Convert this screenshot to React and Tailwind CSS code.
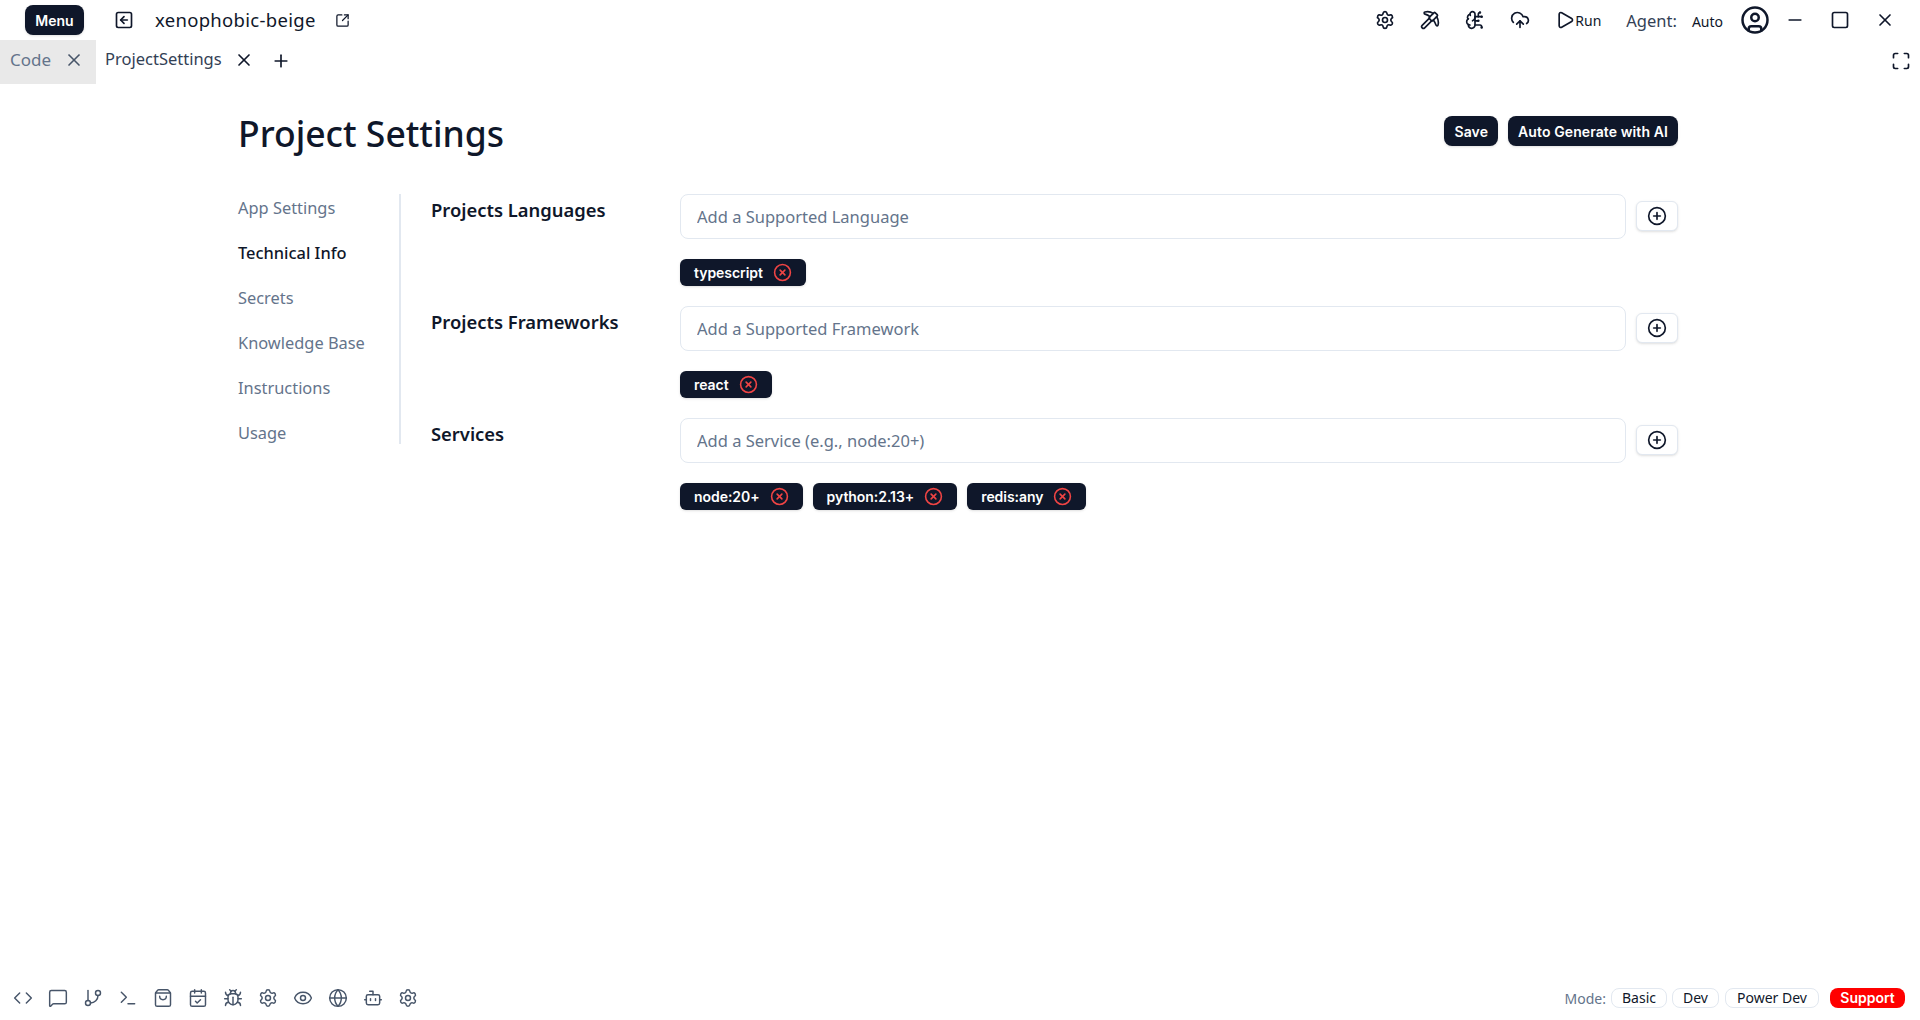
import React from "react";
import {
    Bot,
    BrainCircuit,
    Bug,
    CalendarCheck,
    CirclePlus,
    CircleUser,
    CircleX,
    CloudUpload,
    Code,
    Eye,
    GitBranch,
    Globe,
    Maximize,
    MessageSquare,
    Minus,
    Pickaxe,
    Play,
    Plus,
    Settings,
    ShoppingBag,
    Square,
    SquareArrowLeft,
    SquareArrowOutUpRight,
    Terminal,
    X,
} from "lucide-react";

const sidebarItems = [
    "App Settings",
    "Technical Info",
    "Secrets",
    "Knowledge Base",
    "Instructions",
    "Usage",
];

const sections = [
    {
        label: "Projects Languages",
        placeholder: "Add a Supported Language",
        tags: ["typescript"],
    },
    {
        label: "Projects Frameworks",
        placeholder: "Add a Supported Framework",
        tags: ["react"],
    },
    {
        label: "Services",
        placeholder: "Add a Service (e.g., node:20+)",
        tags: ["node:20+", "python:2.13+", "redis:any"],
    },
];

const footerIcons = [
    Code,
    MessageSquare,
    GitBranch,
    Terminal,
    ShoppingBag,
    CalendarCheck,
    Bug,
    Settings,
    Eye,
    Globe,
    Bot,
    Settings,
];

const Tag = ({ name }) => (
    <div className="flex h-[27px] items-center rounded-md bg-[#0f172a] pl-[14px] pr-[14px] font-['Inter',sans-serif] text-[14px] font-semibold tracking-[-0.05px] text-white shadow-sm">
        {name}
        <CircleX className="ml-[10px] h-[19px] w-[19px] text-[#ef4444]" strokeWidth={2} />
    </div>
);

const Section = ({ section }) => (
    <div className="flex">
        <div className="w-[249px] pt-[2px] text-[18.4px] leading-7 font-semibold text-[#0f172a]">
            {section.label}
        </div>
        <div className="flex-1">
            <div className="flex items-start gap-[10px]">
                <input
                    className="h-[45px] flex-1 rounded-lg border border-[#e2e8f0] bg-white px-4 text-[16.5px] text-[#0f172a] outline-none placeholder:text-[#64748b]"
                    placeholder={section.placeholder}
                />
                <button className="mt-[7px] flex h-[30px] w-[42px] items-center justify-center rounded-md border border-[#e2e8f0] bg-white shadow-sm">
                    <CirclePlus className="h-5 w-5 text-[#0f172a]" strokeWidth={2} />
                </button>
            </div>
            <div className="mt-[20px] flex h-[27px] gap-[10px]">
                {section.tags.map((tag) => (
                    <Tag key={tag} name={tag} />
                ))}
            </div>
        </div>
    </div>
);

const App = () => {
    return (
        <div className="flex h-[1020px] flex-col overflow-hidden bg-white font-['Noto_Sans',sans-serif] text-[#0f172a]">
            <header className="flex h-10 items-center pl-[25px] pr-[25px]">
                <button className="flex h-[30px] w-[59px] items-center justify-center rounded-lg bg-[#0f172a] font-['Inter',sans-serif] text-[14px] font-semibold text-white shadow-sm">
                    Menu
                </button>
                <SquareArrowLeft className="ml-[30px] h-5 w-5" strokeWidth={2} />
                <span className="ml-[21px] text-[18.5px] tracking-[0.3px]">xenophobic-beige</span>
                <SquareArrowOutUpRight className="ml-[19px] h-[15px] w-[15px]" strokeWidth={2} />
                <div className="ml-auto flex items-center">
                    <Settings className="h-5 w-5" strokeWidth={2} />
                    <Pickaxe className="ml-[25px] h-5 w-5" strokeWidth={2} />
                    <BrainCircuit className="ml-[25px] h-5 w-5" strokeWidth={2} />
                    <CloudUpload className="ml-[25px] h-5 w-5" strokeWidth={2} />
                    <Play className="ml-[25px] h-5 w-5" strokeWidth={2} />
                    <span className="text-[14px]">Run</span>
                    <span className="ml-[25px] mt-[2px] text-[16.5px] text-[#334155]">Agent:</span>
                    <span className="ml-[15px] mt-[2px] text-[14px]">Auto</span>
                    <CircleUser className="ml-[17px] h-[30px] w-[30px]" strokeWidth={2} />
                    <Minus className="ml-[15px] h-5 w-5" strokeWidth={2} />
                    <Square className="ml-[25px] h-5 w-5" strokeWidth={2} />
                    <X className="ml-[25px] h-5 w-5" strokeWidth={2} />
                </div>
            </header>

            <div className="flex h-11 items-start pr-[9px]">
                <div className="flex h-11 w-[96px] items-center bg-[#e9e9e9] pb-[5px] pl-[10px] text-[17px] text-[#64748b]">
                    Code
                    <X className="ml-[13px] h-5 w-5 text-[#475569]" strokeWidth={2} />
                </div>
                <div className="flex h-11 items-center pb-[5px] pl-[9px] text-[16.5px] text-[#334155]">
                    ProjectSettings
                    <X className="ml-[12px] h-5 w-5 text-[#0f172a]" strokeWidth={2} />
                </div>
                <Plus className="ml-[17px] mt-[11px] h-5 w-5" strokeWidth={2} />
                <Maximize className="ml-auto mt-[11px] h-5 w-5" strokeWidth={2} />
            </div>

            <main className="flex-1 pl-[238px] pr-[242px] pt-[24px]">
                <div className="flex h-[50px] items-center justify-between">
                    <h1 className="text-[35.5px] font-medium leading-10">Project Settings</h1>
                    <div className="flex gap-[10px] pb-[4px] font-['Inter',sans-serif] text-[14px] font-semibold tracking-[0.1px] text-white">
                        <button className="h-[30px] rounded-lg bg-[#0f172a] px-[10px] shadow-sm">Save</button>
                        <button className="h-[30px] rounded-lg bg-[#0f172a] px-[10px] shadow-sm">
                            Auto Generate with AI
                        </button>
                    </div>
                </div>
                <div className="mt-[36px] flex">
                    <nav className="flex h-[250px] w-[163px] flex-col gap-[20px] border-r-2 border-[#e2e8f0] pt-[1px] text-[16.4px] leading-[25px] text-[#64748b]">
                        {sidebarItems.map((item) => (
                            <div
                                key={item}
                                className={item === "Technical Info" ? "font-medium text-[#0f172a]" : ""}
                            >
                                {item}
                            </div>
                        ))}
                    </nav>
                    <div className="flex flex-1 flex-col gap-[20px] pl-[30px]">
                        {sections.map((section) => (
                            <Section key={section.label} section={section} />
                        ))}
                    </div>
                </div>
            </main>

            <footer className="flex h-[44px] items-center pl-[13px] pr-[15px]">
                <div className="flex gap-[15px]">
                    {footerIcons.map((Icon, i) => (
                        <Icon key={i} className="h-5 w-5 text-[#475569]" strokeWidth={1.75} />
                    ))}
                </div>
                <div className="ml-auto flex items-center text-[14px]">
                    <span className="text-[#64748b]">Mode:</span>
                    <button className="ml-[5px] h-[20px] w-[56px] rounded-lg border border-[#e2e8f0] leading-[18px]">Basic</button>
                    <button className="ml-[5px] h-[20px] w-[47px] rounded-lg border border-[#e2e8f0] leading-[18px]">Dev</button>
                    <button className="ml-[6px] h-[20px] w-[94px] rounded-lg border border-[#e2e8f0] leading-[18px]">Power Dev</button>
                    <button className="ml-[11px] h-[20px] w-[75px] rounded-lg bg-[#ff0000] font-['Inter',sans-serif] font-semibold leading-[20px] text-white">Support</button>
                </div>
            </footer>
        </div>
    );
};

export default App;
